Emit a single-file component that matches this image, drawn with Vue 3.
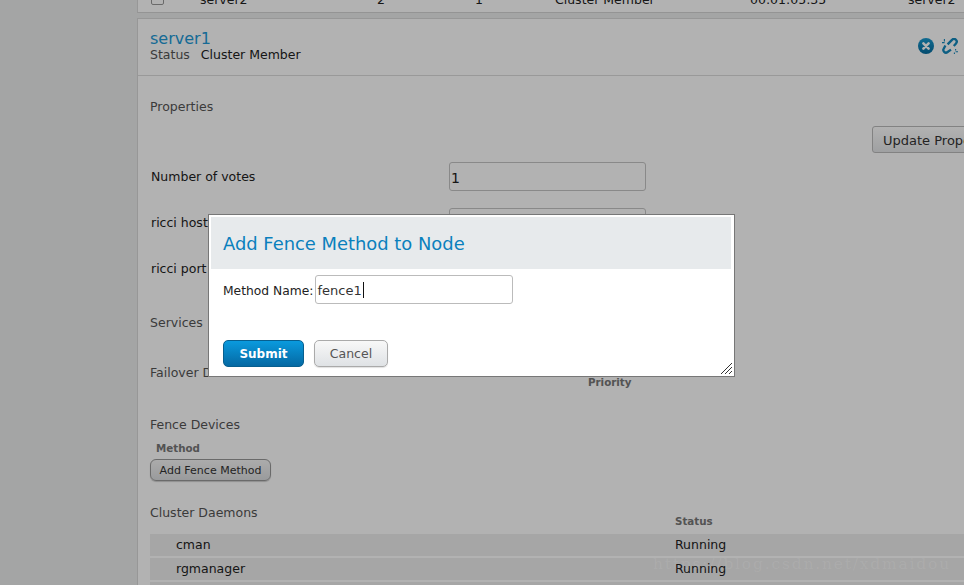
<script setup>
const daemons = [
  { name: 'cman', status: 'Running' },
  { name: 'rgmanager', status: 'Running' }
]
</script>

<template>
  <div class="page">
    <aside class="rail"></aside>
    <main class="main">
      <section class="list-card">
        <div class="list-row">
          <span class="check"></span>
          <span class="c-name">server2</span>
          <span class="c-votes">2</span>
          <span class="c-id">1</span>
          <span class="c-status">Cluster Member</span>
          <span class="c-uptime">00:01:05:35</span>
          <span class="c-host">server2</span>
        </div>
      </section>

      <section class="node-card">
        <header class="node-head">
          <div>
            <h2 class="node-title">server1</h2>
            <div class="node-status"><span class="muted">Status</span><span>Cluster Member</span></div>
          </div>
          <div class="node-icons">
            <svg width="16" height="16" viewBox="0 0 16 16">
              <defs>
                <linearGradient id="blueball" x1="0" y1="0" x2="0" y2="1">
                  <stop offset="0" stop-color="#1a9ad0" />
                  <stop offset="1" stop-color="#066c9e" />
                </linearGradient>
              </defs>
              <circle cx="8" cy="8" r="8" fill="url(#blueball)" />
              <path d="M5.4 5.4l5.2 5.2M10.6 5.4l-5.2 5.2" stroke="#fff" stroke-width="2.6" stroke-linecap="round" />
            </svg>
            <svg width="16" height="16" viewBox="0 0 16 16" fill="none" stroke="#1488bc" stroke-width="2.3">
              <path d="M5.6 6.4 L10 1.9 A2.6 2.6 0 0 1 14 5.4 L11.8 8" />
              <path d="M3.4 7.4 L1.9 10.4 A2.6 2.6 0 0 0 5.6 14 L9 11.6" />
              <path d="M2.4 1v2.6M0 4.6h2.6M13.6 11v1.6M12.4 14.6v1.4M13.6 13.8H16" stroke-width="1.1" />
            </svg>
          </div>
        </header>

        <div class="node-body">
          <h3 class="section-title props-title">Properties</h3>
          <div class="update-row"><button class="grey-btn update-btn">Update Properties</button></div>

          <div class="form-rows">
            <div class="form-row"><label>Number of votes</label><div class="fake-input">1</div></div>
            <div class="form-row"><label>ricci hostname</label><div class="fake-input"></div></div>
            <div class="form-row"><label>ricci port</label><div class="fake-input"></div></div>
          </div>

          <h3 class="section-title services-title">Services</h3>

          <div class="failover">
            <h3 class="section-title">Failover Domains</h3>
            <div class="th priority">Priority</div>
          </div>

          <h3 class="section-title fence-title">Fence Devices</h3>
          <div class="th method">Method</div>
          <button class="grey-btn add-fence">Add Fence Method</button>

          <div class="daemon-head">
            <h3 class="section-title">Cluster Daemons</h3>
            <div class="th status-th">Status</div>
          </div>
          <div class="daemon-list">
            <div v-for="d in daemons" :key="d.name" class="daemon-row">
              <span class="d-name">{{ d.name }}</span>
              <span class="d-status">{{ d.status }}</span>
            </div>
            <div class="daemon-row"></div>
          </div>
        </div>
      </section>
    </main>

    <div class="veil"></div>

    <div class="modal">
      <div class="modal-head"><h1>Add Fence Method to Node</h1></div>
      <div class="modal-form">
        <label>Method Name:</label>
        <div class="modal-input">fence1<span class="caret"></span></div>
      </div>
      <div class="modal-actions">
        <button class="submit">Submit</button>
        <button class="cancel">Cancel</button>
      </div>
      <svg class="grip" width="13" height="13" viewBox="0 0 13 13" stroke="#333" stroke-width="1" shape-rendering="crispEdges">
        <path d="M1 12L12 1M5 12L12 5M9 12L12 9" />
      </svg>
    </div>

    <div class="watermark">https://blog.csdn.net/xdmaidou</div>
  </div>
</template>

<style>
html, body { margin: 0; height: 100%; overflow: hidden; }
</style>

<style scoped>
.page {
  position: relative;
  width: 964px;
  height: 585px;
  overflow: hidden;
  display: flex;
  background: #ebeced;
  font-family: "DejaVu Sans", sans-serif;
  font-size: 12.5px;
  color: #222;
}
.rail {
  width: 137px;
  flex: none;
}
.main {
  flex: 1;
  min-width: 0;
}
.list-card {
  height: 12px;
  overflow: hidden;
  background: #fff;
  border-left: 1px solid #d8d8d8;
  border-bottom: 1px solid #d4d4d4;
  margin-bottom: 5px;
}
.list-row {
  position: relative;
  height: 13px;
  line-height: 13px;
  margin-top: -7px;
}
.list-row span { position: absolute; top: 0; white-space: nowrap; }
.list-row .check {
  left: 13px;
  top: -1px;
  width: 11px;
  height: 11px;
  border: 1px solid #999;
  border-radius: 2px;
}
.c-name { left: 62px; }
.c-votes { left: 239px; }
.c-id { left: 337px; }
.c-status { left: 417px; }
.c-uptime { left: 612px; }
.c-host { left: 770px; }
.node-card {
  background: #fff;
  border-left: 1px solid #d8d8d8;
  border-top: 1px solid #d8d8d8;
  height: 600px;
}
.node-head {
  height: 57px;
  padding: 11px 12px 0 12px;
  box-sizing: border-box;
  border-bottom: 1px solid #dcdcdc;
  display: flex;
  justify-content: space-between;
}
.node-title {
  margin: 0;
  font-size: 16px;
  line-height: 17px;
  font-weight: 400;
  color: #2299d6;
}
.node-status {
  display: flex;
  gap: 11px;
  line-height: 15px;
}
.muted { color: #555; }
.node-icons {
  display: flex;
  gap: 8px;
  padding-top: 8px;
  width: 46px;
  flex: none;
  margin-right: -12px;
}
.node-body { padding: 0 0 0 12px; }
.section-title {
  margin: 0;
  font-size: 12.5px;
  font-weight: 400;
  color: #555;
  line-height: 16px;
}
.props-title { padding-top: 23px; }
.update-row { padding-top: 11px; padding-left: 722px; white-space: nowrap; }
.grey-btn {
  font-family: inherit;
  font-size: 13px;
  color: #333;
  border: 1px solid #bbb;
  border-radius: 3px;
  background: linear-gradient(#fff, #e4e6e8);
  padding: 0;
}
.update-btn {
  width: 130px;
  height: 27px;
  text-align: left;
  padding: 2px 0 0 10px;
}
.form-rows { padding-top: 9px; }
.form-row {
  display: flex;
  height: 46px;
  align-items: flex-start;
}
.form-row label { width: 298px; padding-left: 1px; line-height: 29px; flex: none; }
.fake-input {
  width: 197px;
  height: 29px;
  box-sizing: border-box;
  border: 1px solid #c4c4c4;
  border-radius: 3px;
  background: #fff;
  font-size: 14px;
  line-height: 30px;
  padding-left: 1px;
}
.services-title { padding-top: 15px; }
.failover {
  position: relative;
  padding-top: 34px;
}
.priority { position: absolute; left: 438px; top: 45px; }
.th {
  font-size: 10.3px;
  font-weight: 700;
  color: #777;
  line-height: 13px;
}
.fence-title { padding-top: 36px; }
.method { padding: 9px 0 0 6px; }
.add-fence {
  display: block;
  margin-top: 4px;
  width: 121px;
  height: 22px;
  font-size: 11px;
  border-radius: 6px;
  color: #333;
  border-color: #999;
  background: linear-gradient(#f6f6f6, #dcdee0);
  box-shadow: 0 1px 1px rgba(0, 0, 0, .2);
}
.daemon-head { position: relative; padding-top: 24px; }
.status-th { position: absolute; left: 525px; top: 34px; }
.daemon-list {
  margin-top: 13px;
  display: flex;
  flex-direction: column;
  gap: 2px;
}
.daemon-row {
  position: relative;
  height: 22px;
  background: #eeeeee;
  line-height: 22px;
}
.d-name { position: absolute; left: 26px; }
.d-status { position: absolute; left: 525px; }
.veil {
  position: absolute;
  inset: 0;
  background: rgba(0, 0, 0, .3);
}
.modal {
  position: absolute;
  left: 208px;
  top: 214px;
  width: 527px;
  height: 163px;
  box-sizing: border-box;
  background: #fff;
  border: 1px solid #777;
  padding: 2px;
}
.modal-head {
  height: 52px;
  background: #e7eaec;
  padding-left: 12px;
  margin-right: 1px;
  display: flex;
  align-items: center;
}
.modal-head h1 {
  margin: 0;
  font-size: 17.9px;
  font-weight: 400;
  color: #0a80bd;
}
.modal-form {
  display: flex;
  align-items: center;
  padding: 6px 0 0 12px;
  gap: 2px;
}
.modal-form label { color: #222; font-size: 12.3px; padding-top: 2px; }
.modal-input {
  width: 198px;
  height: 29px;
  box-sizing: border-box;
  border: 1px solid #bbb;
  border-radius: 3px;
  font-size: 13px;
  padding: 1px 0 0 1px;
  color: #333;
  display: flex;
  align-items: center;
}
.caret {
  display: inline-block;
  width: 1px;
  height: 16px;
  background: #111;
  margin-left: 1px;
}
.modal-actions {
  display: flex;
  gap: 10px;
  padding: 36px 0 0 12px;
}
.submit {
  width: 81px;
  height: 27px;
  font-family: inherit;
  font-size: 12px;
  font-weight: 700;
  color: #fff;
  border: 1px solid #075f8f;
  border-radius: 5px;
  background: linear-gradient(#0a9ade, #0569a3);
  padding: 0;
}
.cancel {
  width: 74px;
  height: 27px;
  font-family: inherit;
  font-size: 12.5px;
  color: #555;
  border: 1px solid #aaa;
  border-radius: 5px;
  background: linear-gradient(#f8f8f8, #dfe2e5);
  box-shadow: 0 1px 1px rgba(0, 0, 0, .12);
  padding: 0;
}
.grip { position: absolute; right: 1px; bottom: 1px; }
.watermark {
  position: absolute;
  left: 653px;
  top: 555px;
  font-family: "DejaVu Serif", serif;
  font-size: 15.5px;
  letter-spacing: 1.8px;
  color: rgba(255, 255, 255, .08);
  white-space: nowrap;
}
</style>
